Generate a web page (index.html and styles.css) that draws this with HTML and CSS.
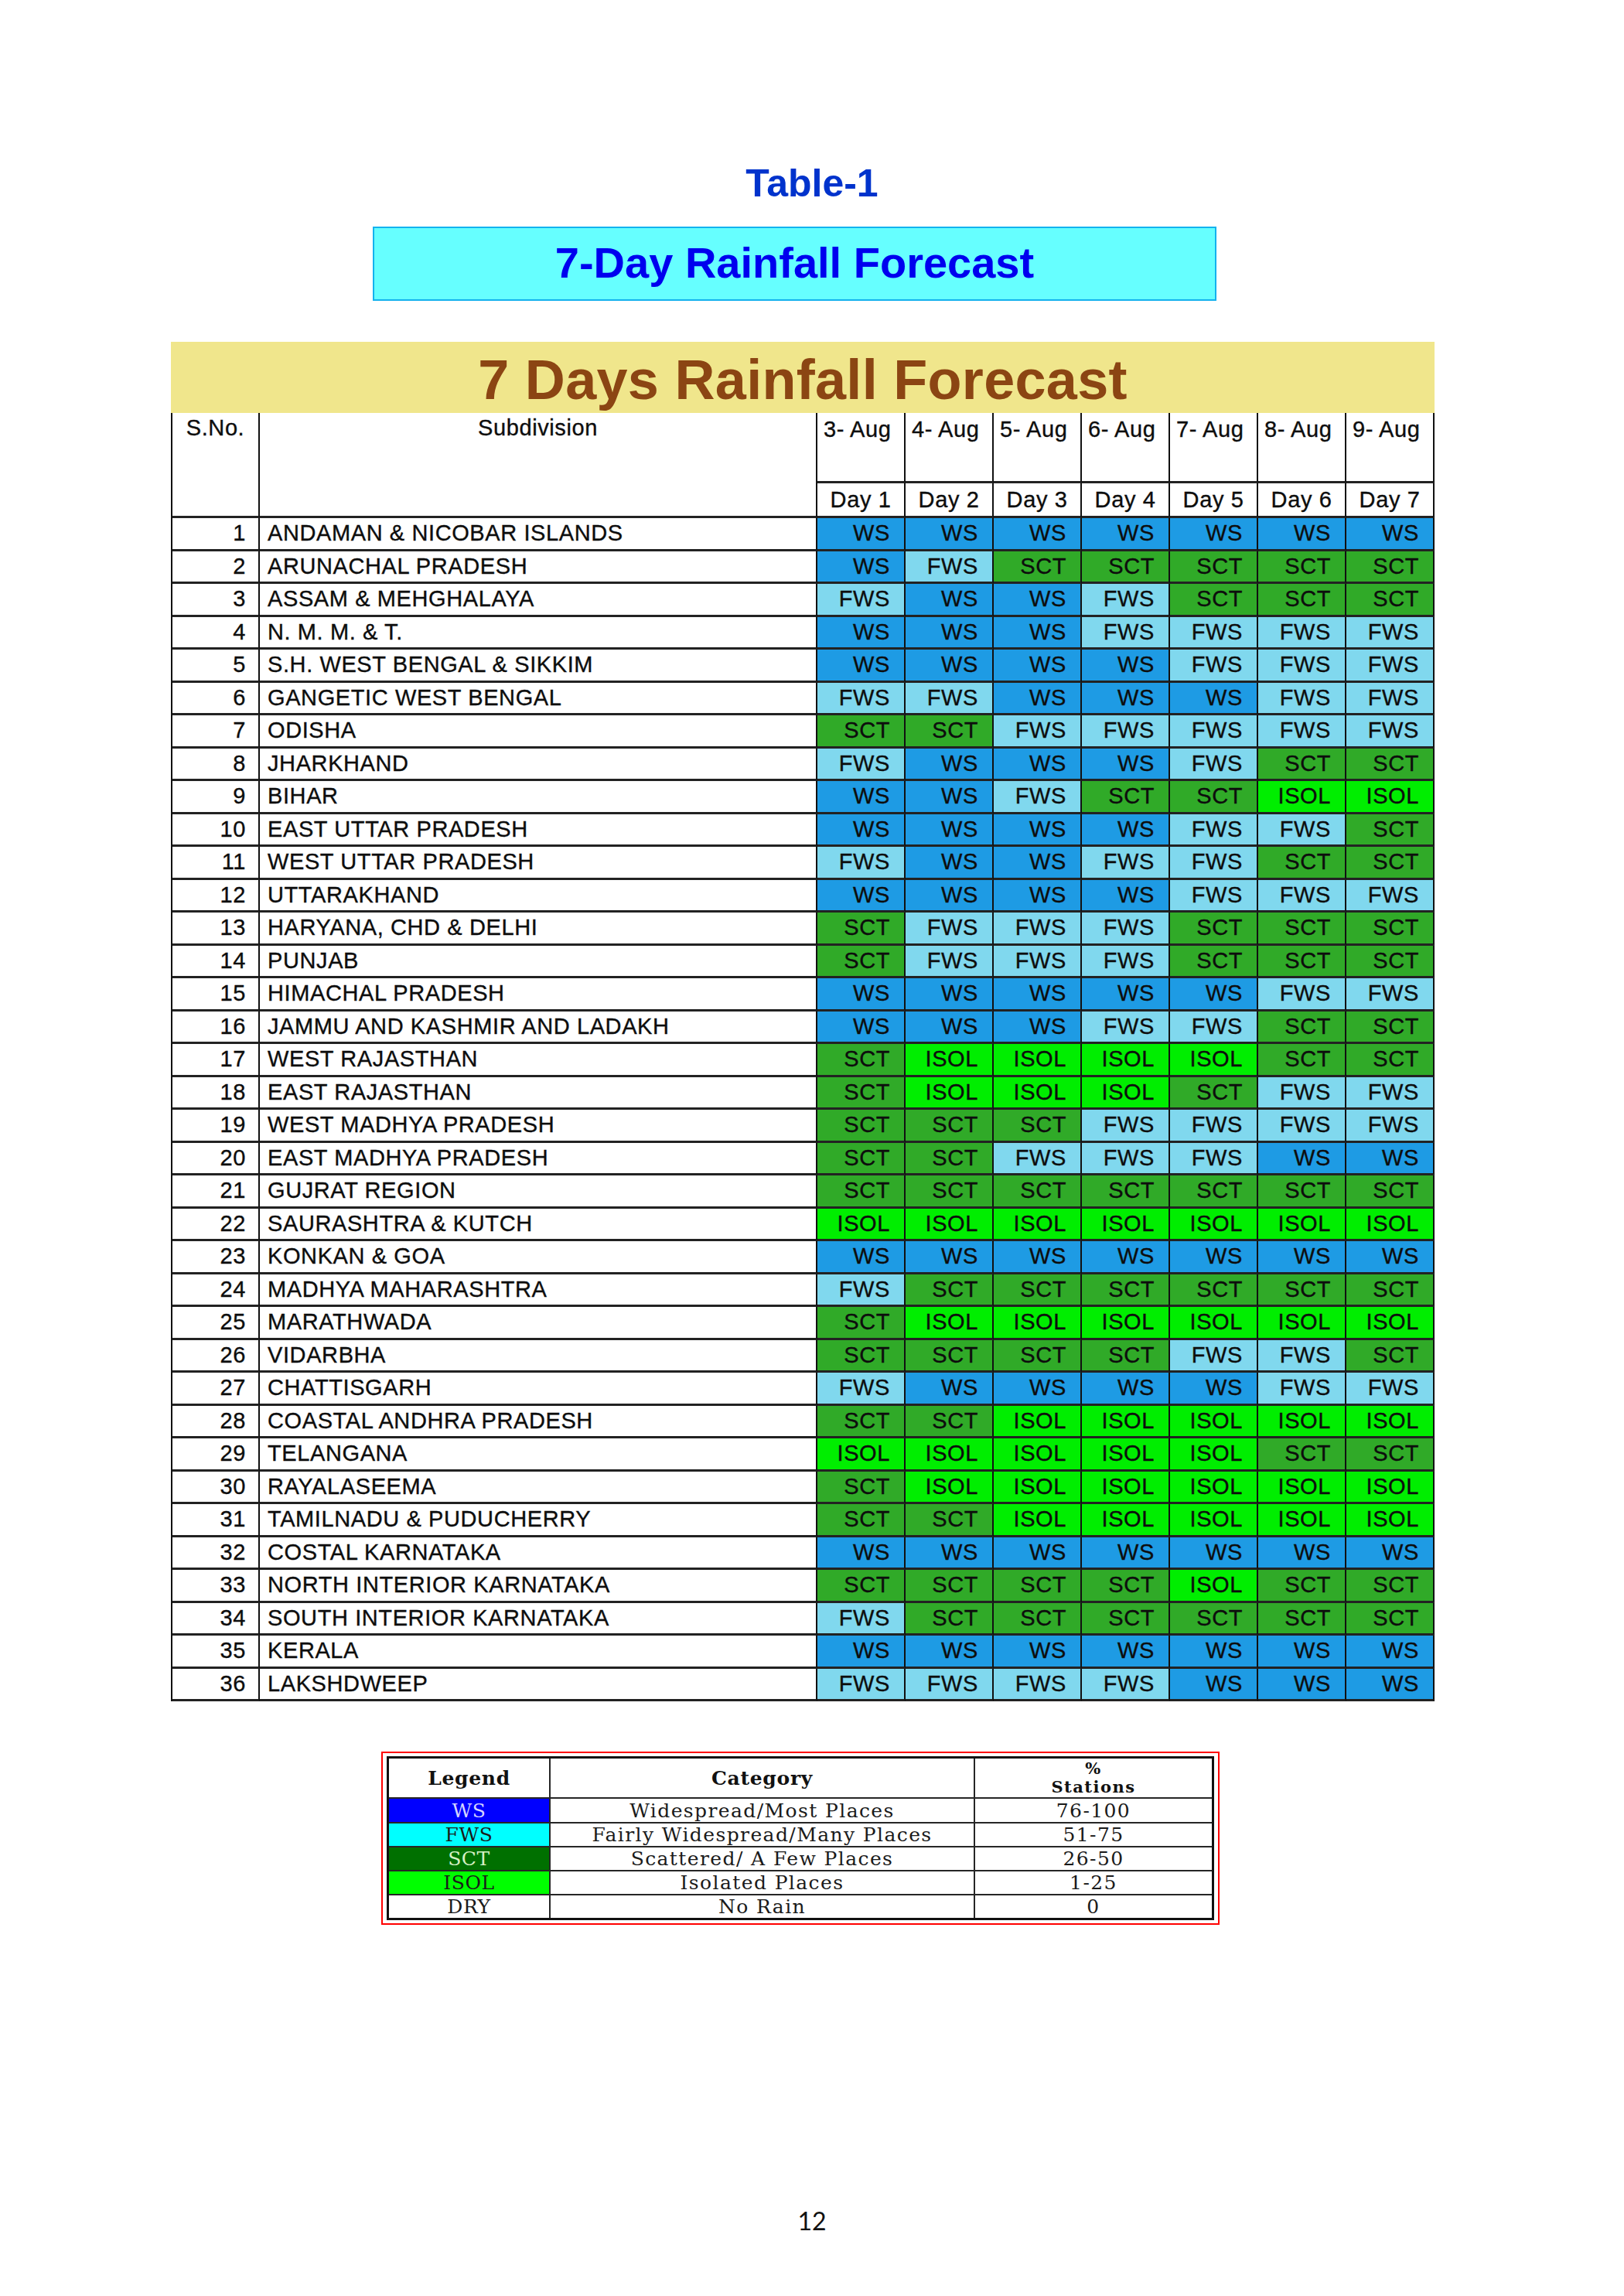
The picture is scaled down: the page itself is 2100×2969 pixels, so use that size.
FILE: index.html
```html
<!DOCTYPE html>
<html lang="en">
<head>
<meta charset="utf-8">
<title>Table-1 7-Day Rainfall Forecast</title>
<link rel="stylesheet" href="styles.css">
</head>
<body>
<h1 class="doc-title">Table-1</h1>
<div class="banner">7-Day Rainfall Forecast</div>

<section class="forecast">
  <div class="forecast-head">7 Days Rainfall Forecast</div>
  <div class="grid">
    <div class="c h-sno">S.No.</div>
    <div class="c h-sub">Subdivision</div>
    <div class="c h-date">3- Aug</div>
    <div class="c h-date">4- Aug</div>
    <div class="c h-date">5- Aug</div>
    <div class="c h-date">6- Aug</div>
    <div class="c h-date">7- Aug</div>
    <div class="c h-date">8- Aug</div>
    <div class="c h-date">9- Aug</div>
    <div class="c h-day">Day 1</div>
    <div class="c h-day">Day 2</div>
    <div class="c h-day">Day 3</div>
    <div class="c h-day">Day 4</div>
    <div class="c h-day">Day 5</div>
    <div class="c h-day">Day 6</div>
    <div class="c h-day">Day 7</div>

    <div class="c n">1</div><div class="c s">ANDAMAN &amp; NICOBAR ISLANDS</div><div class="c v ws">WS</div><div class="c v ws">WS</div><div class="c v ws">WS</div><div class="c v ws">WS</div><div class="c v ws">WS</div><div class="c v ws">WS</div><div class="c v ws">WS</div>
    <div class="c n">2</div><div class="c s">ARUNACHAL PRADESH</div><div class="c v ws">WS</div><div class="c v fws">FWS</div><div class="c v sct">SCT</div><div class="c v sct">SCT</div><div class="c v sct">SCT</div><div class="c v sct">SCT</div><div class="c v sct">SCT</div>
    <div class="c n">3</div><div class="c s">ASSAM &amp; MEHGHALAYA</div><div class="c v fws">FWS</div><div class="c v ws">WS</div><div class="c v ws">WS</div><div class="c v fws">FWS</div><div class="c v sct">SCT</div><div class="c v sct">SCT</div><div class="c v sct">SCT</div>
    <div class="c n">4</div><div class="c s">N. M. M. &amp; T.</div><div class="c v ws">WS</div><div class="c v ws">WS</div><div class="c v ws">WS</div><div class="c v fws">FWS</div><div class="c v fws">FWS</div><div class="c v fws">FWS</div><div class="c v fws">FWS</div>
    <div class="c n">5</div><div class="c s">S.H. WEST BENGAL &amp; SIKKIM</div><div class="c v ws">WS</div><div class="c v ws">WS</div><div class="c v ws">WS</div><div class="c v ws">WS</div><div class="c v fws">FWS</div><div class="c v fws">FWS</div><div class="c v fws">FWS</div>
    <div class="c n">6</div><div class="c s">GANGETIC WEST BENGAL</div><div class="c v fws">FWS</div><div class="c v fws">FWS</div><div class="c v ws">WS</div><div class="c v ws">WS</div><div class="c v ws">WS</div><div class="c v fws">FWS</div><div class="c v fws">FWS</div>
    <div class="c n">7</div><div class="c s">ODISHA</div><div class="c v sct">SCT</div><div class="c v sct">SCT</div><div class="c v fws">FWS</div><div class="c v fws">FWS</div><div class="c v fws">FWS</div><div class="c v fws">FWS</div><div class="c v fws">FWS</div>
    <div class="c n">8</div><div class="c s">JHARKHAND</div><div class="c v fws">FWS</div><div class="c v ws">WS</div><div class="c v ws">WS</div><div class="c v ws">WS</div><div class="c v fws">FWS</div><div class="c v sct">SCT</div><div class="c v sct">SCT</div>
    <div class="c n">9</div><div class="c s">BIHAR</div><div class="c v ws">WS</div><div class="c v ws">WS</div><div class="c v fws">FWS</div><div class="c v sct">SCT</div><div class="c v sct">SCT</div><div class="c v isol">ISOL</div><div class="c v isol">ISOL</div>
    <div class="c n">10</div><div class="c s">EAST UTTAR PRADESH</div><div class="c v ws">WS</div><div class="c v ws">WS</div><div class="c v ws">WS</div><div class="c v ws">WS</div><div class="c v fws">FWS</div><div class="c v fws">FWS</div><div class="c v sct">SCT</div>
    <div class="c n">11</div><div class="c s">WEST UTTAR PRADESH</div><div class="c v fws">FWS</div><div class="c v ws">WS</div><div class="c v ws">WS</div><div class="c v fws">FWS</div><div class="c v fws">FWS</div><div class="c v sct">SCT</div><div class="c v sct">SCT</div>
    <div class="c n">12</div><div class="c s">UTTARAKHAND</div><div class="c v ws">WS</div><div class="c v ws">WS</div><div class="c v ws">WS</div><div class="c v ws">WS</div><div class="c v fws">FWS</div><div class="c v fws">FWS</div><div class="c v fws">FWS</div>
    <div class="c n">13</div><div class="c s">HARYANA, CHD &amp; DELHI</div><div class="c v sct">SCT</div><div class="c v fws">FWS</div><div class="c v fws">FWS</div><div class="c v fws">FWS</div><div class="c v sct">SCT</div><div class="c v sct">SCT</div><div class="c v sct">SCT</div>
    <div class="c n">14</div><div class="c s">PUNJAB</div><div class="c v sct">SCT</div><div class="c v fws">FWS</div><div class="c v fws">FWS</div><div class="c v fws">FWS</div><div class="c v sct">SCT</div><div class="c v sct">SCT</div><div class="c v sct">SCT</div>
    <div class="c n">15</div><div class="c s">HIMACHAL PRADESH</div><div class="c v ws">WS</div><div class="c v ws">WS</div><div class="c v ws">WS</div><div class="c v ws">WS</div><div class="c v ws">WS</div><div class="c v fws">FWS</div><div class="c v fws">FWS</div>
    <div class="c n">16</div><div class="c s">JAMMU AND KASHMIR AND LADAKH</div><div class="c v ws">WS</div><div class="c v ws">WS</div><div class="c v ws">WS</div><div class="c v fws">FWS</div><div class="c v fws">FWS</div><div class="c v sct">SCT</div><div class="c v sct">SCT</div>
    <div class="c n">17</div><div class="c s">WEST RAJASTHAN</div><div class="c v sct">SCT</div><div class="c v isol">ISOL</div><div class="c v isol">ISOL</div><div class="c v isol">ISOL</div><div class="c v isol">ISOL</div><div class="c v sct">SCT</div><div class="c v sct">SCT</div>
    <div class="c n">18</div><div class="c s">EAST RAJASTHAN</div><div class="c v sct">SCT</div><div class="c v isol">ISOL</div><div class="c v isol">ISOL</div><div class="c v isol">ISOL</div><div class="c v sct">SCT</div><div class="c v fws">FWS</div><div class="c v fws">FWS</div>
    <div class="c n">19</div><div class="c s">WEST MADHYA PRADESH</div><div class="c v sct">SCT</div><div class="c v sct">SCT</div><div class="c v sct">SCT</div><div class="c v fws">FWS</div><div class="c v fws">FWS</div><div class="c v fws">FWS</div><div class="c v fws">FWS</div>
    <div class="c n">20</div><div class="c s">EAST MADHYA PRADESH</div><div class="c v sct">SCT</div><div class="c v sct">SCT</div><div class="c v fws">FWS</div><div class="c v fws">FWS</div><div class="c v fws">FWS</div><div class="c v ws">WS</div><div class="c v ws">WS</div>
    <div class="c n">21</div><div class="c s">GUJRAT REGION</div><div class="c v sct">SCT</div><div class="c v sct">SCT</div><div class="c v sct">SCT</div><div class="c v sct">SCT</div><div class="c v sct">SCT</div><div class="c v sct">SCT</div><div class="c v sct">SCT</div>
    <div class="c n">22</div><div class="c s">SAURASHTRA &amp; KUTCH</div><div class="c v isol">ISOL</div><div class="c v isol">ISOL</div><div class="c v isol">ISOL</div><div class="c v isol">ISOL</div><div class="c v isol">ISOL</div><div class="c v isol">ISOL</div><div class="c v isol">ISOL</div>
    <div class="c n">23</div><div class="c s">KONKAN &amp; GOA</div><div class="c v ws">WS</div><div class="c v ws">WS</div><div class="c v ws">WS</div><div class="c v ws">WS</div><div class="c v ws">WS</div><div class="c v ws">WS</div><div class="c v ws">WS</div>
    <div class="c n">24</div><div class="c s">MADHYA MAHARASHTRA</div><div class="c v fws">FWS</div><div class="c v sct">SCT</div><div class="c v sct">SCT</div><div class="c v sct">SCT</div><div class="c v sct">SCT</div><div class="c v sct">SCT</div><div class="c v sct">SCT</div>
    <div class="c n">25</div><div class="c s">MARATHWADA</div><div class="c v sct">SCT</div><div class="c v isol">ISOL</div><div class="c v isol">ISOL</div><div class="c v isol">ISOL</div><div class="c v isol">ISOL</div><div class="c v isol">ISOL</div><div class="c v isol">ISOL</div>
    <div class="c n">26</div><div class="c s">VIDARBHA</div><div class="c v sct">SCT</div><div class="c v sct">SCT</div><div class="c v sct">SCT</div><div class="c v sct">SCT</div><div class="c v fws">FWS</div><div class="c v fws">FWS</div><div class="c v sct">SCT</div>
    <div class="c n">27</div><div class="c s">CHATTISGARH</div><div class="c v fws">FWS</div><div class="c v ws">WS</div><div class="c v ws">WS</div><div class="c v ws">WS</div><div class="c v ws">WS</div><div class="c v fws">FWS</div><div class="c v fws">FWS</div>
    <div class="c n">28</div><div class="c s">COASTAL ANDHRA PRADESH</div><div class="c v sct">SCT</div><div class="c v sct">SCT</div><div class="c v isol">ISOL</div><div class="c v isol">ISOL</div><div class="c v isol">ISOL</div><div class="c v isol">ISOL</div><div class="c v isol">ISOL</div>
    <div class="c n">29</div><div class="c s">TELANGANA</div><div class="c v isol">ISOL</div><div class="c v isol">ISOL</div><div class="c v isol">ISOL</div><div class="c v isol">ISOL</div><div class="c v isol">ISOL</div><div class="c v sct">SCT</div><div class="c v sct">SCT</div>
    <div class="c n">30</div><div class="c s">RAYALASEEMA</div><div class="c v sct">SCT</div><div class="c v isol">ISOL</div><div class="c v isol">ISOL</div><div class="c v isol">ISOL</div><div class="c v isol">ISOL</div><div class="c v isol">ISOL</div><div class="c v isol">ISOL</div>
    <div class="c n">31</div><div class="c s">TAMILNADU &amp; PUDUCHERRY</div><div class="c v sct">SCT</div><div class="c v sct">SCT</div><div class="c v isol">ISOL</div><div class="c v isol">ISOL</div><div class="c v isol">ISOL</div><div class="c v isol">ISOL</div><div class="c v isol">ISOL</div>
    <div class="c n">32</div><div class="c s">COSTAL KARNATAKA</div><div class="c v ws">WS</div><div class="c v ws">WS</div><div class="c v ws">WS</div><div class="c v ws">WS</div><div class="c v ws">WS</div><div class="c v ws">WS</div><div class="c v ws">WS</div>
    <div class="c n">33</div><div class="c s">NORTH INTERIOR KARNATAKA</div><div class="c v sct">SCT</div><div class="c v sct">SCT</div><div class="c v sct">SCT</div><div class="c v sct">SCT</div><div class="c v isol">ISOL</div><div class="c v sct">SCT</div><div class="c v sct">SCT</div>
    <div class="c n">34</div><div class="c s">SOUTH INTERIOR KARNATAKA</div><div class="c v fws">FWS</div><div class="c v sct">SCT</div><div class="c v sct">SCT</div><div class="c v sct">SCT</div><div class="c v sct">SCT</div><div class="c v sct">SCT</div><div class="c v sct">SCT</div>
    <div class="c n">35</div><div class="c s">KERALA</div><div class="c v ws">WS</div><div class="c v ws">WS</div><div class="c v ws">WS</div><div class="c v ws">WS</div><div class="c v ws">WS</div><div class="c v ws">WS</div><div class="c v ws">WS</div>
    <div class="c n">36</div><div class="c s">LAKSHDWEEP</div><div class="c v fws">FWS</div><div class="c v fws">FWS</div><div class="c v fws">FWS</div><div class="c v fws">FWS</div><div class="c v ws">WS</div><div class="c v ws">WS</div><div class="c v ws">WS</div>
  </div>
</section>

<section class="legend">
  <div class="legend-grid">
    <div class="lc lh">Legend</div>
    <div class="lc lh">Category</div>
    <div class="lc lh lh-two"><span class="ln">%</span><span class="ln">Stations</span></div>

    <div class="lc key k-ws">WS</div>
    <div class="lc">Widespread/Most Places</div>
    <div class="lc">76-100</div>

    <div class="lc key k-fws">FWS</div>
    <div class="lc">Fairly Widespread/Many Places</div>
    <div class="lc">51-75</div>

    <div class="lc key k-sct">SCT</div>
    <div class="lc">Scattered/ A Few Places</div>
    <div class="lc">26-50</div>

    <div class="lc key k-isol">ISOL</div>
    <div class="lc">Isolated Places</div>
    <div class="lc">1-25</div>

    <div class="lc key">DRY</div>
    <div class="lc">No Rain</div>
    <div class="lc">0</div>
  </div>
</section>

<div class="page-num">12</div>
</body>
</html>
```

FILE: styles.css
```css
* {
  box-sizing: border-box;
}

html,
body {
  margin: 0;
  padding: 0;
  background: #ffffff;
}

body {
  width: 2100px;
  font-family: "Liberation Sans", Arial, sans-serif;
  color: #111111;
}

.doc-title {
  margin: 212px 0 0;
  text-align: center;
  font-size: 50px;
  line-height: 50px;
  font-weight: bold;
  color: #0033cc;
}

.banner {
  margin: 31px 0 0 482px;
  width: 1091px;
  height: 96px;
  padding-top: 17px;
  border: 2px solid #14b2ee;
  background: #66ffff;
  text-align: center;
  font-size: 56px;
  line-height: 56px;
  font-weight: bold;
  color: #0000ee;
}

/* ---------- main forecast table ---------- */

.forecast {
  margin: 53px 0 0 221px;
  width: 1634px;
}

.forecast-head {
  height: 92px;
  padding-top: 13px;
  background: #f0e68c;
  text-align: center;
  font-size: 72px;
  line-height: 72px;
  font-weight: bold;
  letter-spacing: 0.3px;
  color: #8b4513;
}

.grid {
  display: grid;
  width: 1634px;
  grid-template-columns: 113px 721px repeat(7, 114px);
  grid-template-rows: 91px 45px repeat(36, 42.5px);
  border-left: 2px solid #111111;
}

.c {
  display: flex;
  align-items: center;
  border-right: 2px solid #111111;
  border-bottom: 3px solid #222222;
  font-size: 29px;
  line-height: 29px;
  letter-spacing: 0.6px;
  white-space: nowrap;
  overflow: hidden;
  color: #0d0d0d;
  -webkit-text-stroke: 0.35px #0d0d0d;
}

.h-sno,
.h-sub {
  grid-row: span 2;
  align-items: flex-start;
  justify-content: center;
  padding-top: 5px;
}

.h-date {
  align-items: flex-start;
  padding: 7px 0 0 8px;
}

.h-day {
  justify-content: center;
}

.n {
  justify-content: flex-end;
  padding-right: 16px;
}

.s {
  padding-left: 10px;
}

.v {
  justify-content: flex-end;
  padding-right: 18px;
}

.ws {
  background: #1e9be4;
}

.fws {
  background: #80d8ee;
}

.sct {
  background: #30aa28;
}

.isol {
  background: #00ee00;
}

/* ---------- legend ---------- */

.legend {
  margin: 65px 0 0 493px;
  width: 1084px;
  padding: 4px 5px;
  border: 2px solid #ff0000;
}

.legend-grid {
  display: grid;
  width: 1070px;
  grid-template-columns: 207px 547px 306px;
  grid-template-rows: 50px 30px 29px 29px 29px 29px;
  gap: 2px;
  background: #262626;
  border: 3px solid #111111;
  font-family: "DejaVu Serif", "Liberation Serif", serif;
}

.lc {
  display: flex;
  align-items: center;
  justify-content: center;
  background: #ffffff;
  font-size: 25px;
  line-height: 25px;
  letter-spacing: 1.4px;
  color: #1a1a1a;
  white-space: nowrap;
}

.lh {
  font-weight: bold;
  font-size: 25px;
  letter-spacing: 0.7px;
  color: #111111;
}

.lh-two {
  flex-direction: column;
  justify-content: center;
  font-size: 21px;
  letter-spacing: 1.5px;
}

.ln {
  display: block;
  height: 24.5px;
  line-height: 24.5px;
}

.key {
  letter-spacing: 0.6px;
}

.k-ws {
  background: #0000ff;
  color: #d4d4ff;
}

.k-fws {
  background: #00ffff;
}

.k-sct {
  background: #007000;
  color: #d6f0c4;
}

.k-isol {
  background: #00ff00;
}

/* ---------- footer ---------- */

.page-num {
  margin-top: 367px;
  text-align: center;
  font-family: Lato, "Liberation Sans", sans-serif;
  font-size: 32px;
  line-height: 32px;
  color: #111111;
}
```
